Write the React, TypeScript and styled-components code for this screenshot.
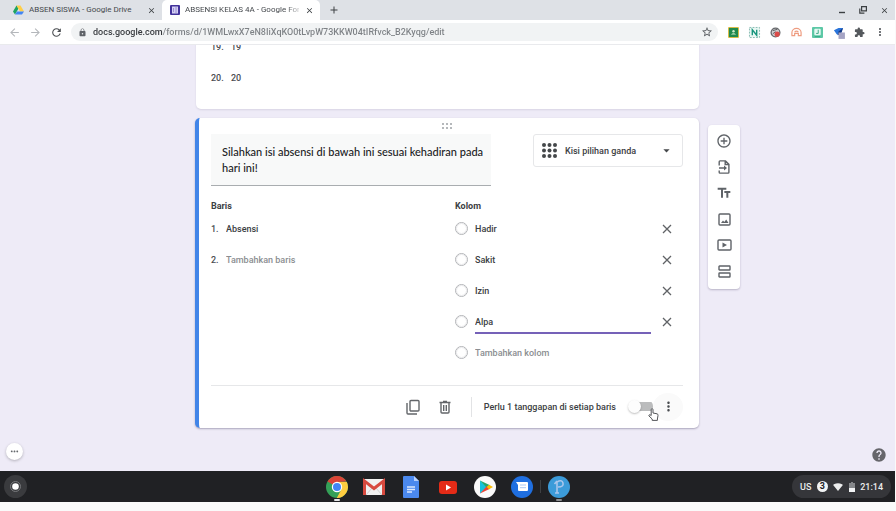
import React from "react";
import styled, { createGlobalStyle } from "styled-components";
import {
  MdAddCircleOutline,
  MdArrowBack,
  MdArrowDropDown,
  MdArrowForward,
  MdClose,
  MdExtension,
  MdHelp,
  MdLock,
  MdMoreHoriz,
  MdMoreVert,
  MdRefresh,
  MdSignalWifi4Bar,
  MdStarBorder,
  MdTextFields,
  MdAdd,
} from "react-icons/md";

const GlobalStyle = createGlobalStyle`
  *, *::before, *::after { box-sizing: border-box; }
  body { margin: 0; background: #fafafa; color: #3c4043; }
  body, button, input, select, textarea { font-family: Roboto, "Liberation Sans", sans-serif; font-size: 9px; font-weight: 500; }
  button { border: 0; padding: 0; background: none; color: inherit; display: grid; place-items: center; flex: none; }
  svg { display: block; }
`;

const Screen = styled.div`
  display: flex;
  flex-direction: column;
  height: 100vh;
  padding: 0 1px 9px 0;
`;

/* Browser frame */
const TabStrip = styled.header`
  display: flex;
  align-items: stretch;
  height: 20px;
  flex: none;
  background: #dee1e6;
`;
const Tab = styled.div<{ $active?: boolean }>`
  display: flex;
  align-items: center;
  gap: 5px;
  width: ${(p) => (p.$active ? 158 : 162)}px;
  padding: 0 6px 0 ${(p) => (p.$active ? 8 : 13)}px;
  background: ${(p) => (p.$active ? "#fff" : "transparent")};
  border-radius: 5px 5px 0 0;
`;
const TabTitle = styled.span<{ $fade?: boolean }>`
  flex: 1;
  font-size: 8px;
  line-height: 12px;
  font-weight: 400;
  white-space: nowrap;
  overflow: hidden;
  color: #45494d;
  ${(p) => p.$fade && "mask-image: linear-gradient(to right, #000 88%, transparent 104%);"}
`;
const SmallButton = styled.button`
  width: 10px;
  height: 20px;
  font-size: 9px;
  color: #3c4043;
`;
const NewTab = styled(SmallButton)`
  margin-left: 8px;
  font-size: 12px;
`;
const WindowControls = styled.div`
  display: flex;
  gap: 11px;
  margin-left: auto;
  padding-right: 6px;
`;
const AddressRow = styled.div`
  display: flex;
  align-items: center;
  height: 25px;
  flex: none;
  padding: 0 9px 0 8px;
  background: #fff;
  border-bottom: 1px solid #e9eaed;
`;
const NavGroup = styled.nav`
  display: flex;
  gap: 8px;
  width: 63px;
`;
const NavButton = styled.button<{ $dim?: boolean }>`
  width: 13px;
  height: 18px;
  font-size: 13px;
  color: ${(p) => (p.$dim ? "#b4b7bb" : "#4a4d51")};
`;
const Omnibox = styled.div`
  display: flex;
  align-items: center;
  gap: 6px;
  flex: 1;
  height: 18px;
  padding: 0 5px 0 7px;
  border-radius: 9px;
  background: #f1f3f4;
  color: #5f6368;
`;
const UrlInput = styled.input`
  flex: 1;
  min-width: 0;
  border: 0;
  padding: 0;
  outline: 0;
  line-height: 14px;
  background: linear-gradient(to right, #33363a 70px, #7d8185 70px);
  background-clip: text;
  -webkit-background-clip: text;
  -webkit-text-fill-color: transparent;
`;
const Extensions = styled.div`
  display: flex;
  gap: 9px;
  margin-left: 9px;
`;
const ExtButton = styled.button`
  width: 12px;
  height: 18px;
  font-size: 12px;
  color: #55595d;
`;

/* Form editor */
const Workspace = styled.main`
  position: relative;
  flex: 1;
  min-height: 0;
  overflow: hidden;
  background: #eeebf7;
`;
const Editor = styled.div`
  display: grid;
  grid-template-columns: 1fr minmax(0, 504px) 1fr;
  column-gap: 9px;
  align-items: start;
  margin-top: -14px;
  padding-right: 1px;
`;
const Cards = styled.div`
  grid-column: 2;
  display: grid;
  gap: 9px;
`;
const Card = styled.section<{ $selected?: boolean }>`
  margin-left: ${(p) => (p.$selected ? 0 : 1)}px;
  padding: ${(p) => (p.$selected ? "0 16px 1px 12px" : "0 16px 16px 15px")};
  border-left: ${(p) => (p.$selected ? "4px solid #4285e8" : "0")};
  border-radius: 5px;
  background: #fff;
  box-shadow: 0 1px 2px rgba(60, 50, 90, ${(p) => (p.$selected ? 0.38 : 0.12)});
`;
const RowList = styled.ol`
  list-style: none;
  margin: 0;
  padding: 0;
`;
const RowItem = styled.li<{ $wide?: boolean }>`
  display: grid;
  grid-template-columns: ${(p) => (p.$wide ? 20 : 15)}px minmax(0, 1fr);
  align-items: center;
  height: 31px;
  color: #4a4d51;
`;
const DragHandle = styled.button`
  width: 100%;
  height: 16px;
  color: #b5b8bb;
`;
const QuestionHead = styled.div`
  display: flex;
  justify-content: space-between;
  align-items: flex-start;
`;
const QuestionText = styled.textarea`
  display: block;
  width: 280px;
  height: 52px;
  padding: 10px 4px 8px 11px;
  border: 0;
  border-bottom: 1px solid #a9adb0;
  background: #f8f9f9;
  resize: none;
  outline: 0;
  overflow: hidden;
  font-family: Lato, Roboto, sans-serif;
  font-size: 11px;
  line-height: 16px;
  color: #202124;
`;
const TypePicker = styled.label`
  display: flex;
  align-items: center;
  width: 150px;
  height: 33px;
  padding: 0 8px;
  border: 1px solid #e6e7e9;
  border-radius: 3px;
  color: #44474a;
`;
const TypeSelect = styled.select`
  appearance: none;
  flex: 1;
  min-width: 0;
  margin-left: 8px;
  padding: 0;
  border: 0;
  background: none;
  color: #3c4043;
`;
const GridParts = styled.div`
  display: grid;
  grid-template-columns: minmax(0, 1fr) 228px;
  margin-top: 11px;
`;
const PartTitle = styled.h2`
  margin: 0;
  height: 16px;
  font-size: 9px;
  line-height: 18px;
  font-weight: 700;
  color: #3c4043;
`;
const Field = styled.input<{ $focused?: boolean }>`
  width: 100%;
  height: 24px;
  padding: 0;
  border: 0;
  border-bottom: 2px solid ${(p) => (p.$focused ? "#7561b8" : "transparent")};
  border-top: 2px solid transparent;
  outline: 0;
  background: none;
  color: #3c4043;
  &::placeholder { color: #8b8e91; opacity: 1; }
`;
const ColumnItem = styled.li`
  display: grid;
  grid-template-columns: 20px minmax(0, 1fr) 32px;
  align-items: center;
  height: 31px;
`;
const RadioMark = styled.input`
  appearance: none;
  width: 13px;
  height: 13px;
  margin: 0;
  border: 1px solid #b3b5b8;
  border-radius: 50%;
  outline: 1px solid #e8e8ea;
  outline-offset: -2px;
`;
const RemoveButton = styled.button`
  width: 32px;
  height: 24px;
  color: #606366;
`;
const CardFooter = styled.footer`
  display: flex;
  align-items: center;
  justify-content: flex-end;
  height: 42px;
  margin-top: 17px;
  border-top: 1px solid #e6e7e9;
`;
const FooterButton = styled.button`
  width: 32px;
  height: 28px;
  color: #63666a;
`;
const Required = styled.label`
  display: flex;
  align-items: center;
  gap: 12px;
  height: 20px;
  margin-left: 10px;
  padding-left: 12px;
  border-left: 1px solid #e2e3e5;
`;
const SwitchWrap = styled.span`
  position: relative;
  display: block;
  width: 25px;
  height: 13px;
`;
const Switch = styled.input`
  appearance: none;
  display: block;
  width: 25px;
  height: 13px;
  margin: 0;
  background: linear-gradient(#bbbcbd, #bbbcbd) right center / 18px 9px no-repeat;
  border-radius: 6px;
  &::before {
    content: "";
    display: block;
    width: 13px;
    height: 13px;
    border-radius: 50%;
    background: #fdfdfd;
    box-shadow: 0 1px 2px rgba(0, 0, 0, 0.25);
  }
`;
const HandPointer = styled.svg`
  position: absolute;
  left: 20px;
  top: 8px;
`;
const MoreButton = styled.button`
  width: 30px;
  height: 28px;
  border-radius: 50%;
  background: #fafafa;
  font-size: 15px;
  color: #4a4d51;
`;
const ToolRail = styled.aside`
  display: grid;
  justify-self: start;
  width: 32px;
  margin-top: 94px;
  padding: 3px 0 5px;
  border-radius: 4px;
  background: #fff;
  box-shadow: 0 1px 2px rgba(60, 50, 90, 0.3);
`;
const ToolButton = styled.button`
  width: 32px;
  height: 26px;
  font-size: 16px;
  color: #5f6368;
`;
const ChatBubble = styled.button`
  position: absolute;
  left: 6px;
  bottom: 11px;
  width: 17px;
  height: 17px;
  border-radius: 50%;
  background: #fff;
  box-shadow: 0 1px 3px rgba(0, 0, 0, 0.25);
  font-size: 11px;
  color: #66696d;
`;
const HelpButton = styled.button`
  position: absolute;
  right: 8px;
  bottom: 8px;
  font-size: 16px;
  color: #66666b;
`;

/* System shelf */
const Shelf = styled.footer`
  display: grid;
  grid-template-columns: 1fr auto 1fr;
  align-items: center;
  height: 31px;
  flex: none;
  padding: 0 4px;
  background: #202124;
`;
const Launcher = styled.button`
  width: 23px;
  height: 23px;
  border-radius: 50%;
  background: #3a3b3e;
`;
const Apps = styled.nav`
  display: flex;
  gap: 15px;
`;
const AppButton = styled.button<{ $running?: boolean; $divided?: boolean }>`
  position: relative;
  width: 22px;
  height: 31px;
  &::after {
    content: "";
    display: ${(p) => (p.$running ? "block" : "none")};
    position: absolute;
    left: 8px;
    bottom: 1px;
    width: 6px;
    height: 2px;
    border-radius: 1px;
    background: ${(p) => (p.$divided ? "#8c8e91" : "#e4e5e6")};
  }
  &::before {
    content: "";
    display: ${(p) => (p.$divided ? "block" : "none")};
    position: absolute;
    left: -8px;
    top: 9px;
    width: 1px;
    height: 13px;
    background: #3e4043;
  }
`;
const StatusPill = styled.button`
  justify-self: end;
  display: flex;
  align-items: center;
  justify-content: space-between;
  width: 99px;
  height: 23px;
  padding: 0 8px;
  border-radius: 12px;
  background: #35363a;
  color: #eceded;
`;
const Count = styled.span`
  width: 11px;
  height: 11px;
  border-radius: 50%;
  background: #f1f3f4;
  color: #202124;
  line-height: 11px;
  font-weight: 700;
`;

const DriveIcon = () => (
  <svg width="11" height="10" viewBox="0 0 22 20" aria-hidden="true">
    <path d="M7 1 0 13l4 6 7-12z" fill="#1da362" />
    <path d="M7 1h8l7 12h-8z" fill="#ffcf48" />
    <path d="M22 13H8l-4 6h14z" fill="#4285f4" />
  </svg>
);
const FormsIcon = () => (
  <svg width="10" height="10" viewBox="0 0 20 20" aria-hidden="true">
    <rect width="20" height="20" rx="2" fill="#42329b" />
    <rect x="4" y="3" width="12" height="14" fill="#d6d1f3" />
    <path d="M7 6v8M10 6h4M10 10h4M10 14h4" stroke="#8b80cc" strokeWidth="1.6" />
  </svg>
);
const CrossIcon = () => (
  <svg width="10" height="10" viewBox="0 0 10 10" aria-hidden="true">
    <path d="m1 1 8 8M9 1 1 9" stroke="currentColor" strokeWidth="1.3" />
  </svg>
);
const DotsIcon = () => (
  <svg width="12" height="6" viewBox="0 0 12 6" fill="currentColor" aria-hidden="true">
    {[1, 5, 9].map((x) => (
      <path key={x} d={`M${x} 0h2v2h-2zM${x} 4h2v2h-2z`} />
    ))}
  </svg>
);
const NineDots = () => (
  <svg width="15" height="15" viewBox="0 0 15 15" fill="currentColor" aria-hidden="true">
    {[2, 7.5, 13].flatMap((y) => [2, 7.5, 13].map((x) => <circle key={`${x}-${y}`} cx={x} cy={y} r="2" />))}
  </svg>
);
const ImportIcon = () => (
  <svg width="12" height="14" viewBox="0 0 12 14" fill="none" stroke="currentColor" strokeWidth="1.4" aria-hidden="true">
    <path d="M1.2 5.5V1.7q0-.8.8-.8h5.5l3.4 3.4v8q0 .8-.8.8H2q-.8 0-.8-.8V10.5M7.2 1v3.500h3.500M1 8h6" />
    <path d="M6 5.5 9 8 6 10.5z" fill="currentColor" stroke="none" />
  </svg>
);
const ImageIcon = () => (
  <svg width="13" height="13" viewBox="0 0 13 13" aria-hidden="true">
    <rect x="1" y="1" width="11" height="11" rx="1" fill="none" stroke="currentColor" strokeWidth="1.4" />
    <path d="m3 10 2-2.5 1.3 1.4L8.2 6.6 10.5 10z" fill="currentColor" />
  </svg>
);
const VideoIcon = () => (
  <svg width="15" height="12" viewBox="0 0 15 12" aria-hidden="true">
    <rect x="1" y="1" width="13" height="10" rx="1" fill="none" stroke="currentColor" strokeWidth="1.4" />
    <path d="M5.5 3.5 10 6 5.5 8.5z" fill="currentColor" />
  </svg>
);
const SectionIcon = () => (
  <svg width="13" height="13" viewBox="0 0 13 13" fill="none" stroke="currentColor" strokeWidth="1.4" aria-hidden="true">
    <rect x="1" y="1" width="11" height="4" rx=".5" />
    <rect x="1" y="8" width="11" height="4" rx=".5" />
  </svg>
);
const CopyIcon = () => (
  <svg width="14" height="16" viewBox="0 0 14 16" fill="none" stroke="currentColor" strokeWidth="1.4" aria-hidden="true">
    <rect x="4" y="1.5" width="9" height="10.5" rx="1" />
    <path d="M1 4v10q0 1 1 1h9" />
  </svg>
);
const TrashIcon = () => (
  <svg width="12" height="14" viewBox="0 0 12 14" fill="none" stroke="currentColor" strokeWidth="1.4" aria-hidden="true">
    <path d="M.5 2.5h11M4 1.5h4M2 3v9q0 1 1 1h6q1 0 1-1V3M4.700 5v6M7.300 5v6" />
  </svg>
);
const RestoreIcon = () => (
  <svg width="8" height="8" viewBox="0 0 8 8" fill="none" stroke="currentColor" strokeWidth="1.2" aria-hidden="true">
    <path d="M2.6.6h4.8v4.2H2.6zM.8 2.6v4.6h4.6" />
  </svg>
);
const MinimizeIcon = () => (
  <svg width="8" height="8" viewBox="0 0 8 8" aria-hidden="true">
    <path d="M1 6.5h6" stroke="currentColor" strokeWidth="1.4" />
  </svg>
);

const extensionIcons = [
  {
    name: "Classroom",
    art: (
      <>
        <rect width="12" height="12" rx="1" fill="#e8c04a" />
        <rect x="1" y="1" width="10" height="10" fill="#218a4e" />
        <circle cx="6" cy="4.6" r="1.3" fill="#cfe9c8" />
        <path d="M3.2 8.3q2.8-3 5.6 0z" fill="#cfe9c8" />
      </>
    ),
  },
  {
    name: "Notes",
    art: (
      <>
        <rect x=".5" y=".5" width="11" height="11" fill="#e9f7f3" stroke="#7fb6ad" strokeDasharray="2 1.4" />
        <path d="M3.6 9V3l4.8 6V3" fill="none" stroke="#16957c" strokeWidth="1.5" />
      </>
    ),
  },
  {
    name: "Recorder",
    art: (
      <>
        <circle cx="6" cy="6" r="4.8" fill="#cfcfd1" stroke="#66686b" strokeWidth="1.4" />
        <path d="m3 4 5-1.5M3 7.5 6 5" stroke="#55575a" />
        <circle cx="7.8" cy="7.8" r="2.8" fill="#db4b48" />
      </>
    ),
  },
  {
    name: "Reader",
    art: (
      <g fill="none" stroke="#ee9c80" strokeWidth="1.3">
        <path d="M1 9.5V6a5 4.5 0 0 1 10 0v3.5H8V7H4v2.5z" />
        <path d="M4 5.5q2-2 4 0" />
      </g>
    ),
  },
  {
    name: "Kami",
    art: (
      <>
        <rect width="12" height="12" rx="1" fill="#5cc8a6" />
        <rect x="2.5" y="2" width="7" height="7" rx="1" fill="#e4f8f1" />
        <path d="M6.8 3v4H4.5M3 10.5h6" stroke="#31a581" fill="none" />
      </>
    ),
  },
  {
    name: "Capture",
    art: (
      <>
        <path d="M1 3.5 6 1h5L7 9 4 8z" fill="#2a74da" />
        <path d="m6 5 5-4-2 6-4 2z" fill="#123a86" />
        <rect x="6" y="6" width="7" height="7" fill="#a5a4c4" />
      </>
    ),
  },
];

const shelfApps = [
  {
    name: "Chrome",
    running: true,
    art: (
      <>
        <circle cx="11" cy="11" r="11" fill="#34a058" />
        <path d="M11 11 1.5 5.5A11 11 0 0 1 20.5 5.5L11 6z" fill="#db4437" />
        <path d="M11 6h9.8A11 11 0 0 1 10.8 22l4.5-8.5z" fill="#ffcd40" />
        <circle cx="11" cy="11" r="5.2" fill="#fff" />
        <circle cx="11" cy="11" r="4" fill="#4285f4" />
      </>
    ),
  },
  {
    name: "Gmail",
    art: (
      <>
        <rect x="0" y="3" width="22" height="16" rx="1.5" fill="#f1f1f1" />
        <path d="m3 19 6-7M19 19l-6-7" stroke="#d1d1d1" />
        <path d="M1.5 19V5L11 12.5 20.5 5v14" fill="none" stroke="#d84a3f" strokeWidth="3" />
      </>
    ),
  },
  {
    name: "Docs",
    art: (
      <>
        <path d="M3 1q0-1 1-1h10l5 5v16q0 1-1 1H4q-1 0-1-1z" fill="#4b89ee" />
        <path d="m14 0 5 5h-5z" fill="#b7d0fb" />
        <path d="M7 11h8M7 13.5h8M7 16h5" stroke="#dce8fd" strokeWidth="1.3" />
      </>
    ),
  },
  {
    name: "YouTube",
    art: (
      <>
        <rect x="2" y="5" width="18" height="13" rx="3" fill="#e42b17" />
        <path d="m9 8.5 5 3-5 3z" fill="#fff" />
      </>
    ),
  },
  {
    name: "Play Store",
    art: (
      <>
        <circle cx="11" cy="11" r="11" fill="#fafafa" />
        <path d="M6 4.5v13l7-6.5z" fill="#16c1dc" />
        <path d="m6 4.5 10 4.8-3 2.7z" fill="#25a86b" />
        <path d="m6 17.5 10-4.8-3-2.7z" fill="#ea4335" />
        <path d="m15 8.800 4 2.200-4 2.300-2.300-2.300z" fill="#fbbc04" />
      </>
    ),
  },
  {
    name: "Messages",
    art: (
      <>
        <circle cx="11" cy="11" r="11" fill="#1f6fe0" />
        <path d="M5 6h11q1 0 1 1v7q0 1-1 1H8q-1 0-1-1V9z" fill="#fff" />
        <path d="M9 9h6M9 11.7h6" stroke="#a9c8f4" />
      </>
    ),
  },
  {
    name: "Pen",
    running: true,
    divided: true,
    art: (
      <>
        <circle cx="11" cy="11" r="11" fill="#3c9bd9" />
        <path d="M9 17V6q5-3 6 1t-5 4M6.5 8 9 5M7 17h4" fill="none" stroke="#a9c6ec" strokeWidth="1.6" />
      </>
    ),
  },
];

const tools = [
  { name: "Tambahkan pertanyaan", icon: <MdAddCircleOutline /> },
  { name: "Impor pertanyaan", icon: <ImportIcon /> },
  { name: "Tambahkan judul", icon: <MdTextFields /> },
  { name: "Tambahkan gambar", icon: <ImageIcon /> },
  { name: "Tambahkan video", icon: <VideoIcon /> },
  { name: "Tambahkan bagian", icon: <SectionIcon /> },
];

const columns = ["Hadir", "Sakit", "Izin", "Alpa"];

export default function App() {
  return (
    <>
      <GlobalStyle />
      <Screen>
        <TabStrip>
          <Tab>
            <DriveIcon />
            <TabTitle>ABSEN SISWA - Google Drive</TabTitle>
            <SmallButton aria-label="Close tab"><MdClose /></SmallButton>
          </Tab>
          <Tab $active>
            <FormsIcon />
            <TabTitle $fade>ABSENSI KELAS 4A - Google For</TabTitle>
            <SmallButton aria-label="Close tab"><MdClose /></SmallButton>
          </Tab>
          <NewTab aria-label="New tab"><MdAdd /></NewTab>
          <WindowControls>
            <SmallButton aria-label="Minimize"><MinimizeIcon /></SmallButton>
            <SmallButton aria-label="Restore"><RestoreIcon /></SmallButton>
            <SmallButton aria-label="Close window"><MdClose /></SmallButton>
          </WindowControls>
        </TabStrip>
        <AddressRow>
          <NavGroup aria-label="History">
            <NavButton $dim aria-label="Back"><MdArrowBack /></NavButton>
            <NavButton $dim aria-label="Forward"><MdArrowForward /></NavButton>
            <NavButton aria-label="Reload"><MdRefresh /></NavButton>
          </NavGroup>
          <Omnibox>
            <MdLock size={9} />
            <UrlInput
              aria-label="Address"
              defaultValue="docs.google.com/forms/d/1WMLwxX7eN8IiXqKO0tLvpW73KKW04tIRfvck_B2Kyqg/edit"
            />
            <ExtButton aria-label="Bookmark"><MdStarBorder /></ExtButton>
          </Omnibox>
          <Extensions>
            {extensionIcons.map((e) => (
              <ExtButton key={e.name} aria-label={e.name}>
                <svg width="11" height="11" viewBox="0 0 12 12" overflow="visible" aria-hidden="true">{e.art}</svg>
              </ExtButton>
            ))}
            <ExtButton aria-label="Extensions"><MdExtension size={11} /></ExtButton>
            <ExtButton aria-label="Menu"><MdMoreVert /></ExtButton>
          </Extensions>
        </AddressRow>

        <Workspace>
          <Editor>
            <Cards>
              <Card>
                <RowList>
                  <RowItem $wide><span>19.</span><span>19</span></RowItem>
                  <RowItem $wide><span>20.</span><span>20</span></RowItem>
                </RowList>
              </Card>
              <Card $selected>
                <DragHandle aria-label="Pindahkan"><DotsIcon /></DragHandle>
                <QuestionHead>
                  <QuestionText
                    aria-label="Pertanyaan"
                    defaultValue="Silahkan isi absensi di bawah ini sesuai kehadiran pada hari ini!"
                  />
                  <TypePicker>
                    <NineDots />
                    <TypeSelect aria-label="Jenis pertanyaan">
                      <option>Kisi pilihan ganda</option>
                    </TypeSelect>
                    <MdArrowDropDown size={15} />
                  </TypePicker>
                </QuestionHead>
                <GridParts>
                  <div>
                    <PartTitle>Baris</PartTitle>
                    <RowList>
                      <RowItem><span>1.</span><Field aria-label="Baris 1" defaultValue="Absensi" /></RowItem>
                      <RowItem><span>2.</span><Field aria-label="Baris 2" placeholder="Tambahkan baris" /></RowItem>
                    </RowList>
                  </div>
                  <div>
                    <PartTitle>Kolom</PartTitle>
                    <RowList>
                      {columns.map((c) => (
                        <ColumnItem key={c}>
                          <RadioMark type="radio" name="kolom" aria-label={c} />
                          <Field aria-label={`Kolom ${c}`} defaultValue={c} $focused={c === "Alpa"} />
                          <RemoveButton aria-label={`Hapus ${c}`}><CrossIcon /></RemoveButton>
                        </ColumnItem>
                      ))}
                      <ColumnItem>
                        <RadioMark type="radio" name="kolom" aria-label="Kolom baru" />
                        <Field aria-label="Kolom baru" placeholder="Tambahkan kolom" />
                      </ColumnItem>
                    </RowList>
                  </div>
                </GridParts>
                <CardFooter>
                  <FooterButton aria-label="Duplikat"><CopyIcon /></FooterButton>
                  <FooterButton aria-label="Hapus"><TrashIcon /></FooterButton>
                  <Required>
                    Perlu 1 tanggapan di setiap baris
                    <SwitchWrap>
                      <Switch type="checkbox" role="switch" />
                      <HandPointer width="11" height="13" viewBox="0 0 11 13" aria-hidden="true">
                        <path
                          d="M3.2 7.5V1.7q0-1 .9-1t.9 1V5l4 .8q1.2.3 1 1.6L9.4 11v1.4H4.2V11L1 8q-.5-.9.3-1.2.7-.2 1.9.7z"
                          fill="#fff"
                          stroke="#54565a"
                        />
                      </HandPointer>
                    </SwitchWrap>
                  </Required>
                  <MoreButton aria-label="Opsi lainnya"><MdMoreVert /></MoreButton>
                </CardFooter>
              </Card>
            </Cards>
            <ToolRail>
              {tools.map((t) => (
                <ToolButton key={t.name} aria-label={t.name}>{t.icon}</ToolButton>
              ))}
            </ToolRail>
          </Editor>
          <ChatBubble aria-label="Lainnya"><MdMoreHoriz /></ChatBubble>
          <HelpButton aria-label="Bantuan"><MdHelp /></HelpButton>
        </Workspace>

        <Shelf>
          <Launcher aria-label="Launcher">
            <svg width="13" height="13" viewBox="0 0 13 13" aria-hidden="true">
              <circle cx="6.5" cy="6.5" r="5" fill="none" stroke="#77797c" />
              <circle cx="6.5" cy="6.5" r="3.3" fill="#fff" />
            </svg>
          </Launcher>
          <Apps aria-label="Apps">
            {shelfApps.map((a) => (
              <AppButton key={a.name} aria-label={a.name} $running={a.running} $divided={a.divided}>
                <svg width="22" height="22" viewBox="0 0 22 22" aria-hidden="true">{a.art}</svg>
              </AppButton>
            ))}
          </Apps>
          <StatusPill>
            <span>US</span>
            <Count>3</Count>
            <MdSignalWifi4Bar size={10} />
            <svg width="6" height="10" viewBox="0 0 6 10" aria-hidden="true">
              <path d="M2 0h2v1h2v9H0V1h2z" fill="#85878a" />
              <path d="M0 6h6v4H0z" fill="#f1f3f4" />
            </svg>
            <span>21:14</span>
          </StatusPill>
        </Shelf>
      </Screen>
    </>
  );
}
